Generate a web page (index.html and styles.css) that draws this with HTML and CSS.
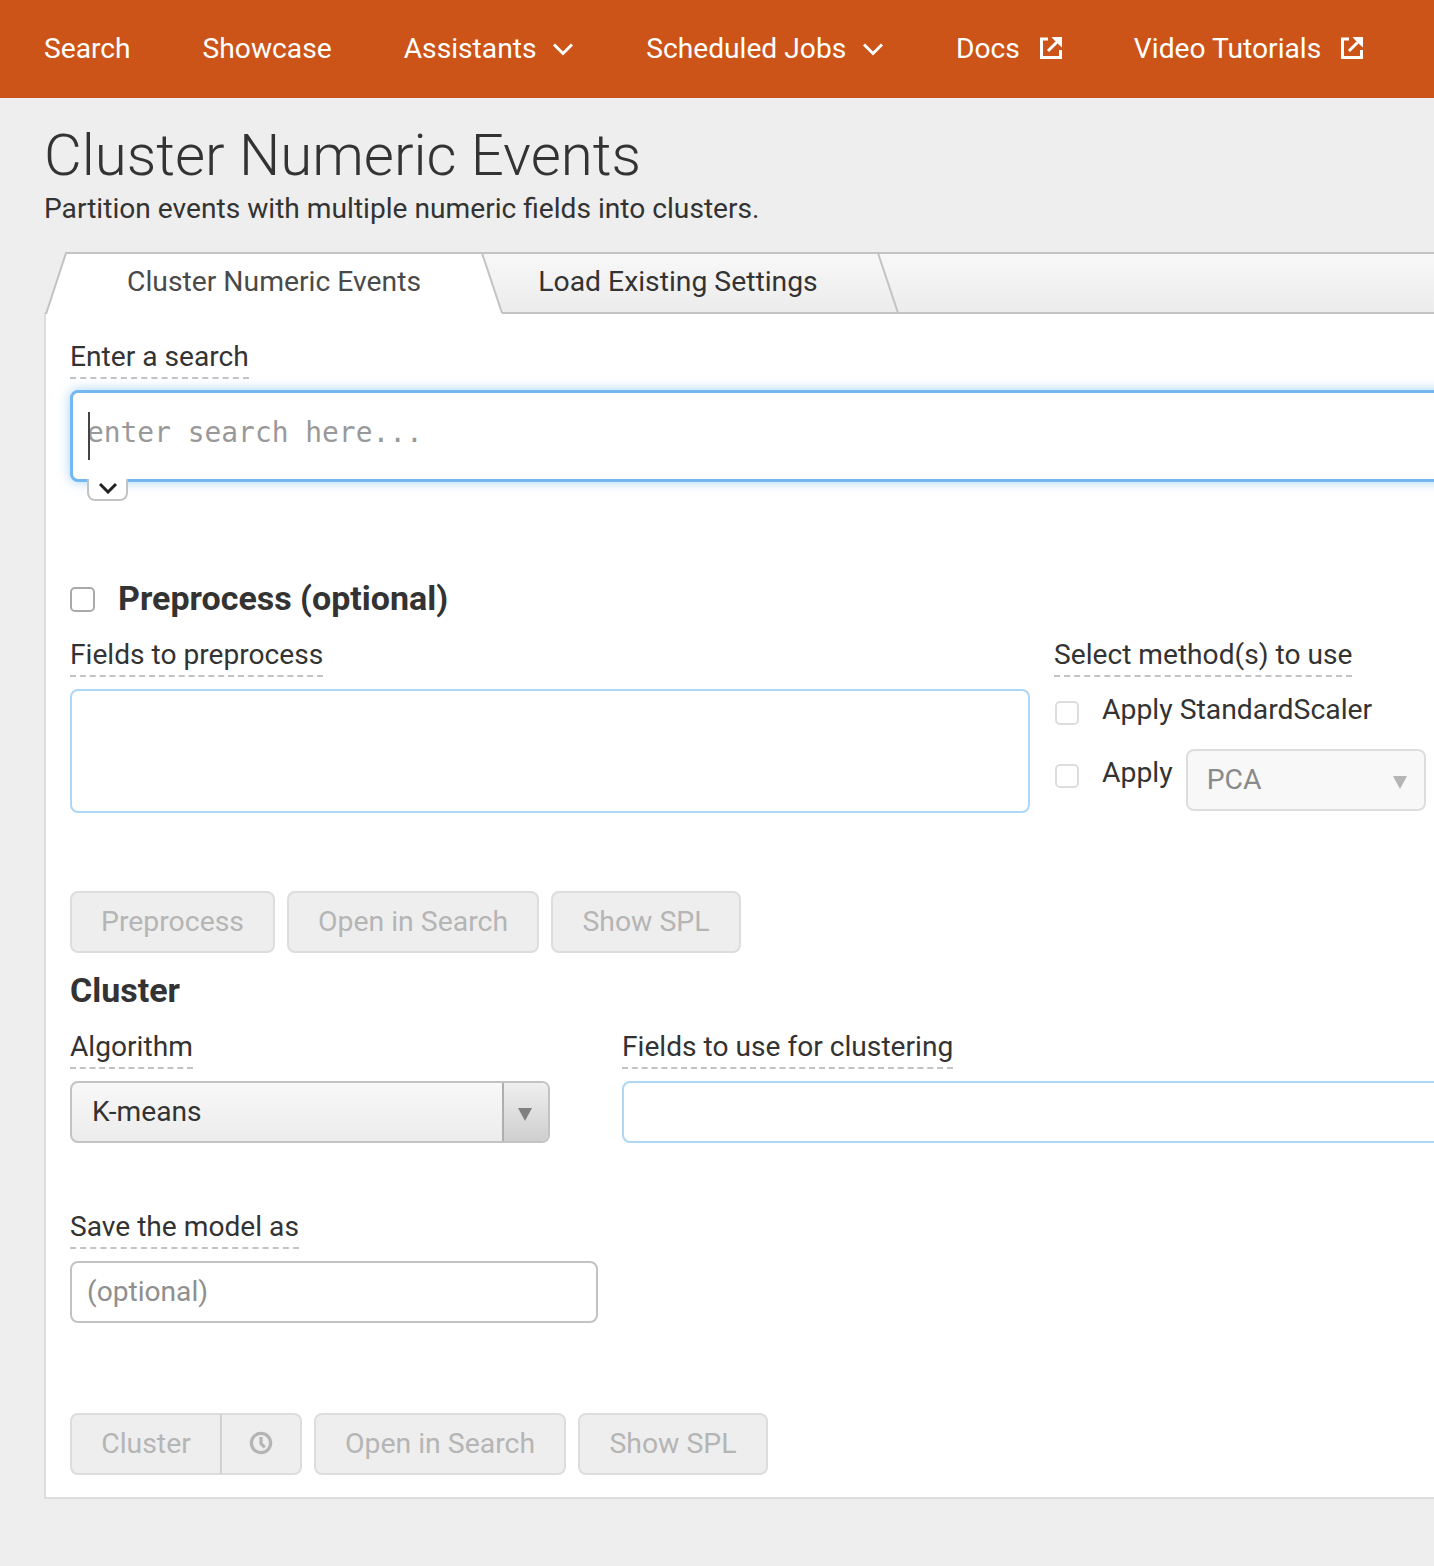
FILE: index.html
```html
<!DOCTYPE html>
<html lang="en">
<head>
<meta charset="utf-8">
<title>Cluster Numeric Events</title>
<link rel="stylesheet" href="styles.css">
</head>
<body>
<nav class="nav">
  <a class="nav-item">Search</a>
  <a class="nav-item">Showcase</a>
  <a class="nav-item">Assistants
    <svg class="nav-chevron" viewBox="0 0 22 14"><path d="M2 2.500 11 11.500 20 2.500"/></svg></a>
  <a class="nav-item">Scheduled Jobs
    <svg class="nav-chevron" viewBox="0 0 22 14"><path d="M2 2.500 11 11.500 20 2.500"/></svg></a>
  <a class="nav-item">Docs
    <svg class="nav-ext" viewBox="0 0 22 22"><path class="ext-box" d="M8 2H1.500V20.500H20.500V13"/><path class="ext-box" d="M8 14 18 4"/><path class="ext-head" d="M11.500 0H22V10.500L18 7V4H15Z"/></svg></a>
  <a class="nav-item">Video Tutorials
    <svg class="nav-ext" viewBox="0 0 22 22"><path class="ext-box" d="M8 2H1.500V20.500H20.500V13"/><path class="ext-box" d="M8 14 18 4"/><path class="ext-head" d="M11.500 0H22V10.500L18 7V4H15Z"/></svg></a>
</nav>

<main class="main">
  <h1 class="title">Cluster Numeric Events</h1>
  <p class="subtitle">Partition events with multiple numeric fields into clusters.</p>

  <section class="panel">
    <div class="tabs">
      <svg class="tabs-shape" viewBox="-1 0 900 62" width="900" height="62">
        <polygon class="wedge" points="-1,0 21,0 1,60 -1,62"/>
        <polygon class="tab-active" points="1,62 21,2 437,2 457,62"/>
        <path class="tab-line" d="M1 62 21 1H437L457 61"/>
        <path class="tab-line" d="M833 1 853 61"/>
      </svg>
      <a class="tab tab-first">Cluster Numeric Events</a>
      <a class="tab tab-second">Load Existing Settings</a>
    </div>

    <div class="body">
      <label class="label">Enter a search</label>
      <div class="editor">
        <span class="caret"></span>
        <span class="editor-placeholder">enter search here...</span>
        <span class="editor-toggle"><svg viewBox="0 0 20 12"><path d="M2 2 10 10 18 2"/></svg></span>
      </div>

      <h2 class="section-head section-preprocess"><span class="check check-strong"></span>Preprocess (optional)</h2>

      <div class="prep-row">
        <div class="prep-fields">
          <label class="label">Fields to preprocess</label>
          <div class="multi multi-tall"></div>
        </div>
        <div class="prep-methods">
          <label class="label">Select method(s) to use</label>
          <div class="method method-one"><span class="check"></span>Apply StandardScaler</div>
          <div class="method method-two"><span class="check"></span><span class="apply">Apply</span>
            <div class="pca">PCA<span class="pca-arrow"></span></div>
          </div>
        </div>
      </div>

      <div class="btn-row btn-row-prep">
        <button class="btn btn-pre">Preprocess</button>
        <button class="btn btn-open">Open in Search</button>
        <button class="btn btn-spl">Show SPL</button>
      </div>

      <h2 class="section-head section-cluster">Cluster</h2>

      <div class="cluster-row">
        <div class="algo">
          <label class="label">Algorithm</label>
          <div class="algo-select"><span class="algo-value">K-means</span><span class="algo-btn"><span class="algo-arrow"></span></span></div>
        </div>
        <div class="cluster-fields">
          <label class="label">Fields to use for clustering</label>
          <div class="multi multi-short"></div>
        </div>
      </div>

      <div class="save">
        <label class="label">Save the model as</label>
        <div class="save-input">(optional)</div>
      </div>

      <div class="btn-row btn-row-cluster">
        <div class="btn-group">
          <button class="btn btn-cluster">Cluster</button>
          <button class="btn btn-clock"><svg viewBox="0 0 22 22"><circle cx="11" cy="11" r="8.800"/><path d="M11 5.500V11.500L14.500 15"/></svg></button>
        </div>
        <button class="btn btn-open">Open in Search</button>
        <button class="btn btn-spl">Show SPL</button>
      </div>
    </div>
  </section>
</main>
</body>
</html>
```
FILE: styles.css
```css
* { box-sizing: border-box; }
html, body { margin: 0; padding: 0; }
body {
  width: 1434px;
  height: 1566px;
  overflow: hidden;
  background: #eeeeee;
  color: #333333;
  font-family: Roboto, "Liberation Sans", sans-serif;
  font-size: 28.15px;
}

/* Top navigation */
.nav {
  display: flex;
  align-items: center;
  height: 98px;
  padding-left: 8px;
  background: #cc5418;
}
.nav-item {
  display: flex;
  align-items: center;
  padding: 0 36px;
  color: #ffffff;
  font-size: 28.2px;
  line-height: 40px;
  white-space: nowrap;
}
.nav-chevron {
  width: 22px;
  height: 14px;
  margin-left: 15.7px;
  fill: none;
  stroke: #ffffff;
  stroke-width: 3px;
}
.nav-ext {
  width: 22px;
  height: 22px;
  margin-left: 20px;
  margin-top: -2px;
}
.ext-box { fill: none; stroke: #ffffff; stroke-width: 3px; }
.ext-head { fill: #ffffff; }

/* Page head */
.main { padding-left: 45px; }
.title {
  margin: 0 0 1px -1px;
  padding-top: 24px;
  font-size: 58.2px;
  line-height: 66px;
  font-weight: 300;
  color: #333333;
}
.subtitle {
  margin: 0 0 0 -1px;
  line-height: 40px;
  color: #333333;
}

/* Panel and tabs */
.panel {
  width: 1500px;
  height: 1247px;
  margin: 23px 0 0 -1px;
  background: #ffffff;
  border-left: 2px solid #dddddd;
  border-bottom: 2px solid #dddddd;
}
.tabs {
  position: relative;
  display: flex;
  height: 62px;
  margin-left: -2px;
  background: linear-gradient(#f8f8f8, #ececec);
  border-top: 2px solid #c3c3c3;
  border-bottom: 2px solid #c3c3c3;
}
.tabs-shape {
  position: absolute;
  left: 0;
  top: -2px;
}
.wedge { fill: #eeeeee; }
.tab-active { fill: #ffffff; }
.tab-line { fill: none; stroke: #c3c3c3; stroke-width: 2px; }
.tab {
  position: relative;
  line-height: 56px;
  text-align: center;
  white-space: nowrap;
}
.tab-first { width: 460px; color: #4a4a4a; font-size: 28.3px; }
.tab-second { width: 348px; color: #333333; font-size: 28.3px; }

.body { padding: 23px 0 0 24px; }

/* Labels */
.label {
  display: inline-block;
  height: 42px;
  line-height: 40px;
  border-bottom: 2px dashed #c3c3c3;
  vertical-align: top;
  white-space: nowrap;
}

/* Search editor */
.editor {
  position: relative;
  width: 1450px;
  height: 92px;
  margin-top: 11px;
  border: 3px solid #74b8ef;
  border-radius: 8px;
  box-shadow: 0 0 12px rgba(116, 184, 239, 0.65);
  background: #ffffff;
}
.editor-placeholder {
  display: block;
  padding: 20px 0 0 14px;
  font-family: "DejaVu Sans Mono", monospace;
  font-size: 27.9px;
  line-height: 40px;
  color: #999999;
  white-space: pre;
}
.caret {
  position: absolute;
  left: 15px;
  top: 19px;
  width: 2px;
  height: 48px;
  background: #444444;
}
.editor-toggle {
  position: absolute;
  left: 14px;
  top: 86px;
  display: flex;
  justify-content: center;
  width: 41px;
  height: 22px;
  padding-top: 3px;
  background: #ffffff;
  border: 2px solid #c3c3c3;
  border-top: 0;
  border-radius: 0 0 8px 8px;
}
.editor-toggle svg {
  width: 20px;
  height: 12px;
  fill: none;
  stroke: #222222;
  stroke-width: 3px;
}

/* Section headings */
.section-head {
  display: flex;
  align-items: center;
  margin: 0;
  font-weight: 700;
  font-size: 34px;
  line-height: 40px;
  color: #333333;
}
.section-preprocess { margin-top: 96px; }
.section-cluster { margin-top: 17px; }

/* Checkboxes */
.check {
  flex: none;
  display: inline-block;
  width: 24px;
  height: 24px;
  border: 2px solid #dddddd;
  border-radius: 5px;
  background: #ffffff;
}
.check-strong {
  width: 25px;
  height: 25px;
  margin: 2px 23px 0 0;
  border-color: #a9a9a9;
}

/* Preprocess */
.prep-row { display: flex; margin-top: 17px; }
.prep-fields { width: 984px; }
.multi {
  border: 2px solid #aed6f5;
  border-radius: 8px;
  background: #ffffff;
}
.multi-tall { width: 960px; height: 124px; margin-top: 12px; }
.multi-short { width: 900px; height: 62px; margin-top: 12px; }
.method { display: flex; align-items: flex-start; font-size: 28.35px; }
.method .check { margin: 0 23px 0 1px; }
.method-one { margin-top: 23px; height: 40px; line-height: 20px; }
.method-one .check { margin-top: 1px; }
.method-two { margin-top: 9px; line-height: 30px; }
.method-two .check { margin-top: 15px; }
.apply { margin-top: 9px; }
.pca {
  position: relative;
  flex: none;
  width: 240px;
  height: 62px;
  margin-left: 13px;
  padding-left: 19px;
  line-height: 58px;
  color: #8a8a8a;
  background: #f8f8f8;
  border: 2px solid #dddddd;
  border-radius: 8px;
}
.pca-arrow {
  position: absolute;
  right: 17px;
  top: 25px;
  border-left: 7px solid transparent;
  border-right: 7px solid transparent;
  border-top: 13px solid #b5b5b5;
}

/* Buttons */
.btn-row { display: flex; gap: 12px; }
.btn-row-prep { margin-top: 78px; }
.btn-row-cluster { margin-top: 90px; }
.btn {
  height: 62px;
  padding: 0 0 2px;
  font-family: inherit;
  font-size: 28.4px;
  color: #b5b5b5;
  background: #eeeeee;
  border: 2px solid #dddddd;
  border-radius: 8px;
}
.btn-pre { width: 205px; }
.btn-open { width: 252px; }
.btn-spl { width: 190px; }
.btn-group { display: flex; }
.btn-cluster {
  width: 150px;
  border-right: 0;
  border-radius: 8px 0 0 8px;
}
.btn-clock {
  display: flex;
  align-items: center;
  justify-content: center;
  width: 82px;
  border-left: 2px solid #d0d0d0;
  border-radius: 0 8px 8px 0;
}
.btn-clock svg {
  width: 24px;
  height: 24px;
  fill: none;
  stroke: #b5b5b5;
  stroke-width: 3px;
}

/* Cluster */
.cluster-row { display: flex; margin-top: 17px; }
.algo { width: 552px; }
.algo-select {
  display: flex;
  width: 480px;
  height: 62px;
  margin-top: 12px;
  background: linear-gradient(#f8f8f8, #ececec);
  border: 2px solid #c3c3c3;
  border-radius: 8px;
  overflow: hidden;
}
.algo-value {
  flex: 1;
  padding-left: 20px;
  line-height: 58px;
  color: #333333;
}
.algo-btn {
  position: relative;
  width: 46px;
  background: linear-gradient(#efefef, #cfcfcf);
  border-left: 2px solid #aeaeae;
}
.algo-arrow {
  position: absolute;
  left: 14px;
  top: 25px;
  border-left: 7px solid transparent;
  border-right: 7px solid transparent;
  border-top: 13px solid #808080;
}

.save { margin-top: 64px; }
.save-input {
  width: 528px;
  height: 62px;
  margin-top: 12px;
  padding-left: 15px;
  line-height: 58px;
  color: #8f8f8f;
  background: #ffffff;
  border: 2px solid #c3c3c3;
  border-radius: 8px;
}
```
